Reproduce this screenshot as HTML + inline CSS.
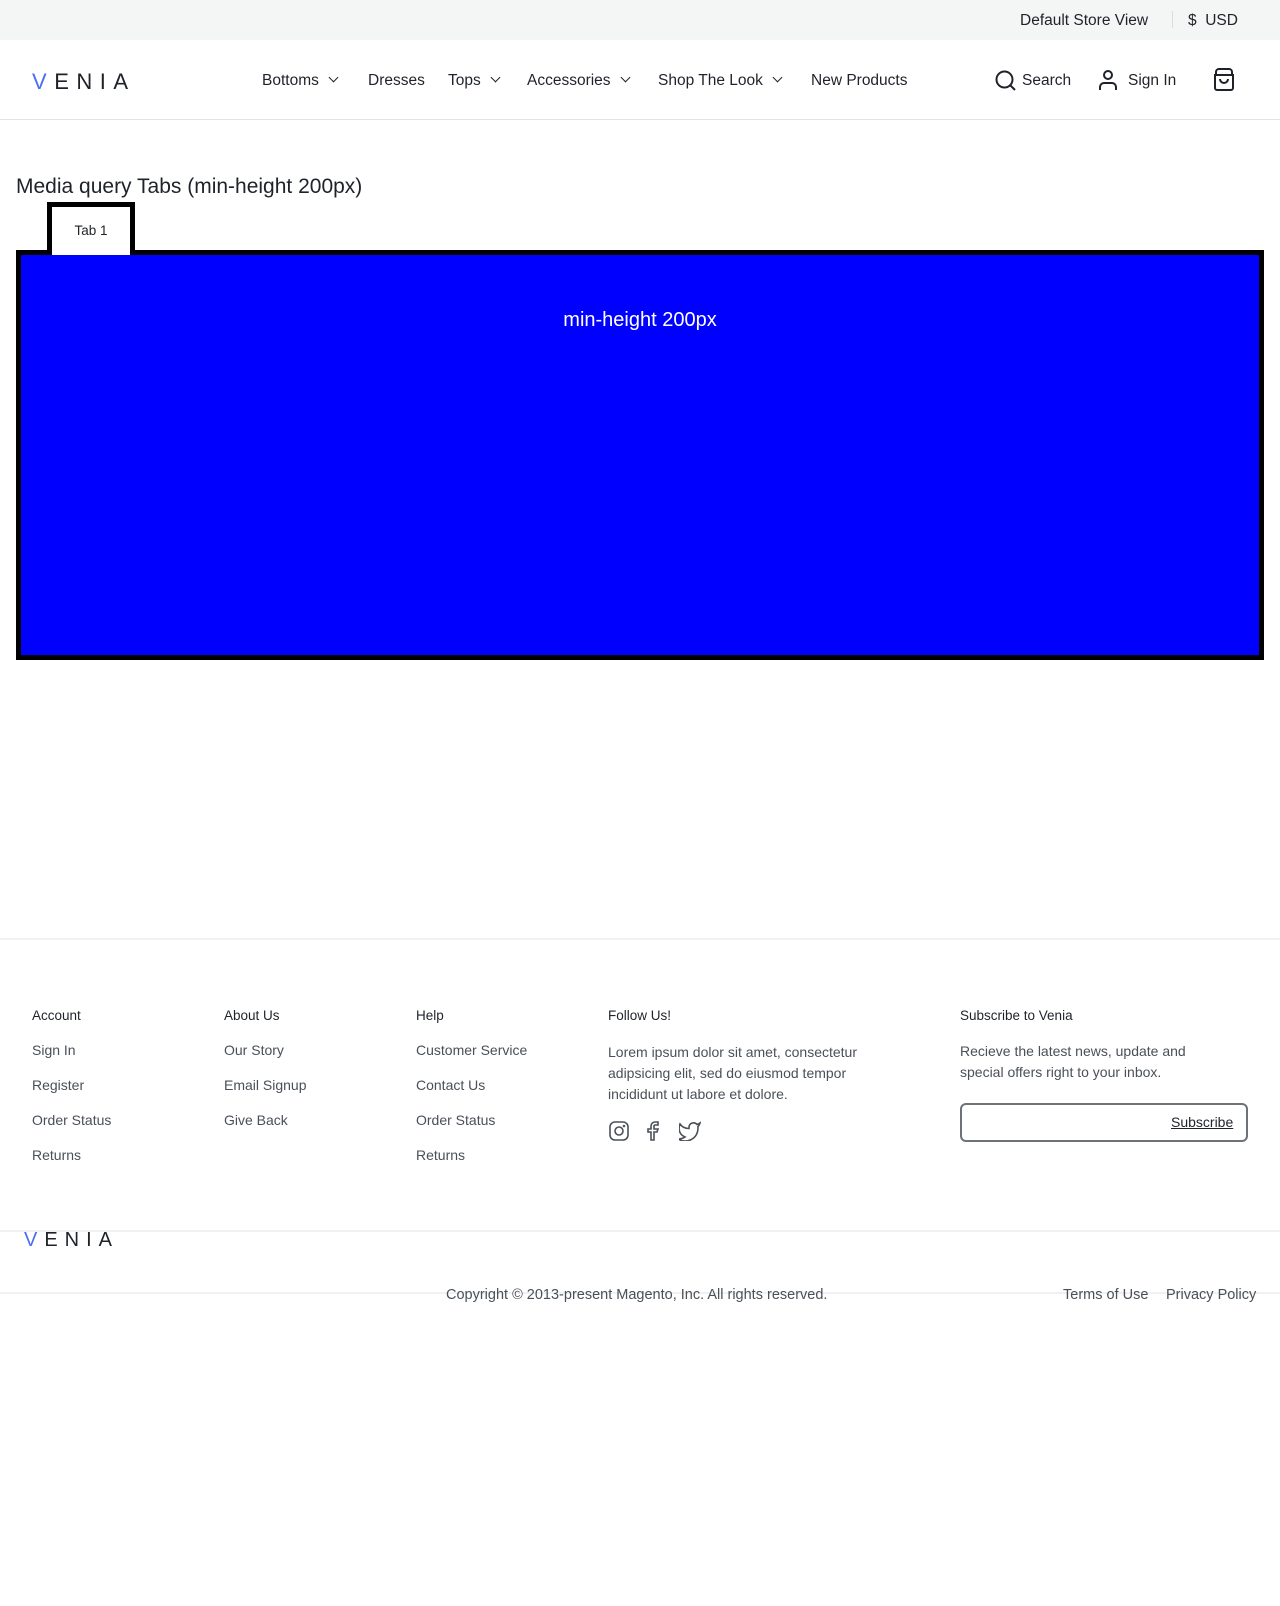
<!DOCTYPE html>
<html><head><meta charset="utf-8"><style>
*{box-sizing:border-box;margin:0;padding:0}
body{width:1280px;height:1606px;position:relative;background:#fff;font-family:"Liberation Sans",sans-serif;color:#1f2329;overflow:hidden}
.a{position:absolute;white-space:nowrap}
.nav{font-size:15.5px;top:72px}
.chev{display:inline-block;width:7px;height:7px;border-right:1.5px solid #1f2329;border-bottom:1.5px solid #1f2329;transform:rotate(45deg);margin-left:11px;position:relative;top:-4px}
.h{font-size:13.5px;top:1008px;color:#1f2329}
.l{font-size:14px;color:#4a5058}
</style></head><body>
<div class="a" style="left:0;top:0;width:1280px;height:40px;background:#f4f5f5"></div>
<div class="a" style="left:1020px;top:12px;font-size:15.5px">Default Store View</div>
<div class="a" style="left:1172px;top:11px;width:1px;height:17px;background:#dcdcdc"></div>
<div class="a" style="left:1188px;top:12px;font-size:15.5px">$&nbsp; USD</div>
<div class="a" style="left:0;top:119px;width:1280px;height:1px;background:#e3e3e3"></div>
<div class="a" style="left:32px;top:69px;font-size:22px;letter-spacing:7.5px;font-weight:300"><span style="color:#4a6ff0">V</span>ENIA</div>
<div class="a nav" style="left:262px">Bottoms<span class="chev"></span></div>
<div class="a nav" style="left:368px">Dresses</div>
<div class="a nav" style="left:448px">Tops<span class="chev"></span></div>
<div class="a nav" style="left:527px">Accessories<span class="chev"></span></div>
<div class="a nav" style="left:658px">Shop The Look<span class="chev"></span></div>
<div class="a nav" style="left:811px">New Products</div>
<svg class="a" style="left:995px;top:70px" width="22" height="22" viewBox="0 0 22 22" fill="none" stroke="#1f2329" stroke-width="2"><circle cx="9.5" cy="9.5" r="8"/><path d="M15 15l5 5"/></svg>
<div class="a nav" style="left:1022px">Search</div>
<svg class="a" style="left:1097px;top:69px" width="22" height="22" viewBox="0 0 22 22" fill="none" stroke="#1f2329" stroke-width="2"><circle cx="11" cy="6" r="4"/><path d="M3 21v-3a4 4 0 0 1 4-4h8a4 4 0 0 1 4 4v3"/></svg>
<div class="a nav" style="left:1128px">Sign In</div>
<svg class="a" style="left:1213px;top:68px" width="22" height="23" viewBox="0 0 22 23" fill="none" stroke="#1f2329" stroke-width="2"><path d="M3 7V4a3 3 0 0 1 3-3h10a3 3 0 0 1 3 3v3M2 7h18v13a2 2 0 0 1-2 2H4a2 2 0 0 1-2-2z"/><path d="M7 11a4 4 0 0 0 8 0"/></svg>

<div class="a" style="left:16px;top:175px;font-size:21px">Media query Tabs (min-height 200px)</div>
<div class="a" style="left:16px;top:250px;width:1248px;height:410px;border:5px solid #000;background:#0000ff"></div>
<div class="a" style="left:47px;top:202px;width:88px;height:53px;border:5px solid #000;border-bottom:none;background:#fff;font-size:13.5px;text-align:center;padding-top:16px">Tab 1</div>
<div class="a" style="left:0;top:309px;width:1280px;text-align:center;color:#fff;font-size:20px">min-height 200px</div>

<div class="a" style="left:0;top:938px;width:1280px;height:2px;background:#f1f1f1"></div>
<div class="a h" style="left:32px">Account</div>
<div class="a h" style="left:224px">About Us</div>
<div class="a h" style="left:416px">Help</div>
<div class="a h" style="left:608px">Follow Us!</div>
<div class="a h" style="left:960px">Subscribe to Venia</div>
<div class="a l" style="left:32px;top:1042px">Sign In</div>
<div class="a l" style="left:32px;top:1077px">Register</div>
<div class="a l" style="left:32px;top:1112px">Order Status</div>
<div class="a l" style="left:32px;top:1147px">Returns</div>
<div class="a l" style="left:224px;top:1042px">Our Story</div>
<div class="a l" style="left:224px;top:1077px">Email Signup</div>
<div class="a l" style="left:224px;top:1112px">Give Back</div>
<div class="a l" style="left:416px;top:1042px">Customer Service</div>
<div class="a l" style="left:416px;top:1077px">Contact Us</div>
<div class="a l" style="left:416px;top:1112px">Order Status</div>
<div class="a l" style="left:416px;top:1147px">Returns</div>
<div class="a l" style="left:608px;top:1042px;line-height:21px">Lorem ipsum dolor sit amet, consectetur<br>adipsicing elit, sed do eiusmod tempor<br>incididunt ut labore et dolore.</div>
<div class="a l" style="left:960px;top:1041px;line-height:21px">Recieve the latest news, update and<br>special offers right to your inbox.</div>
<svg class="a" style="left:609px;top:1121px" width="20" height="20" viewBox="0 0 20 20" fill="none" stroke="#4a5058" stroke-width="1.6"><rect x="1" y="1" width="18" height="18" rx="5"/><circle cx="10" cy="10" r="4"/><circle cx="15" cy="5" r=".5"/></svg>
<svg class="a" style="left:646px;top:1121px" width="14" height="20" viewBox="0 0 14 20" fill="none" stroke="#4a5058" stroke-width="1.6"><path d="M12 1H9a4 4 0 0 0-4 4v3H2v3h3v8h3v-8h3l1-3H8V5a1 1 0 0 1 1-1h3z"/></svg>
<svg class="a" style="left:679px;top:1121px" width="22" height="20" viewBox="0 0 22 20" fill="none" stroke="#4a5058" stroke-width="1.6"><path d="M21 2a10 10 0 0 1-3 1.5 4.5 4.5 0 0 0-8 3v1A10.7 10.7 0 0 1 1 3s-4 9 5 13a11.6 11.6 0 0 1-7 2c9 5 20 0 20-11.5a4.5 4.5 0 0 0-.1-.8A7.7 7.7 0 0 0 21 2z"/></svg>
<div class="a" style="left:960px;top:1103px;width:288px;height:39px;border:2px solid #6d7278;border-radius:6px"></div>
<div class="a" style="left:1171px;top:1114px;font-size:14px;text-decoration:underline;color:#1f2329">Subscribe</div>

<div class="a" style="left:0;top:1230px;width:1280px;height:2px;background:#f1f1f1"></div>
<div class="a" style="left:24px;top:1229px;font-size:20px;letter-spacing:7px;font-weight:300"><span style="color:#4a6ff0">V</span>ENIA</div>
<div class="a" style="left:0;top:1292px;width:1280px;height:2px;background:#f1f1f1"></div>
<div class="a" style="left:446px;top:1287px;font-size:14.5px;color:#4a5058">Copyright © 2013-present Magento, Inc. All rights reserved.</div>
<div class="a" style="left:1063px;top:1287px;font-size:14.5px;color:#4a5058">Terms of Use</div>
<div class="a" style="left:1166px;top:1287px;font-size:14.5px;color:#4a5058">Privacy Policy</div>
</body></html>
